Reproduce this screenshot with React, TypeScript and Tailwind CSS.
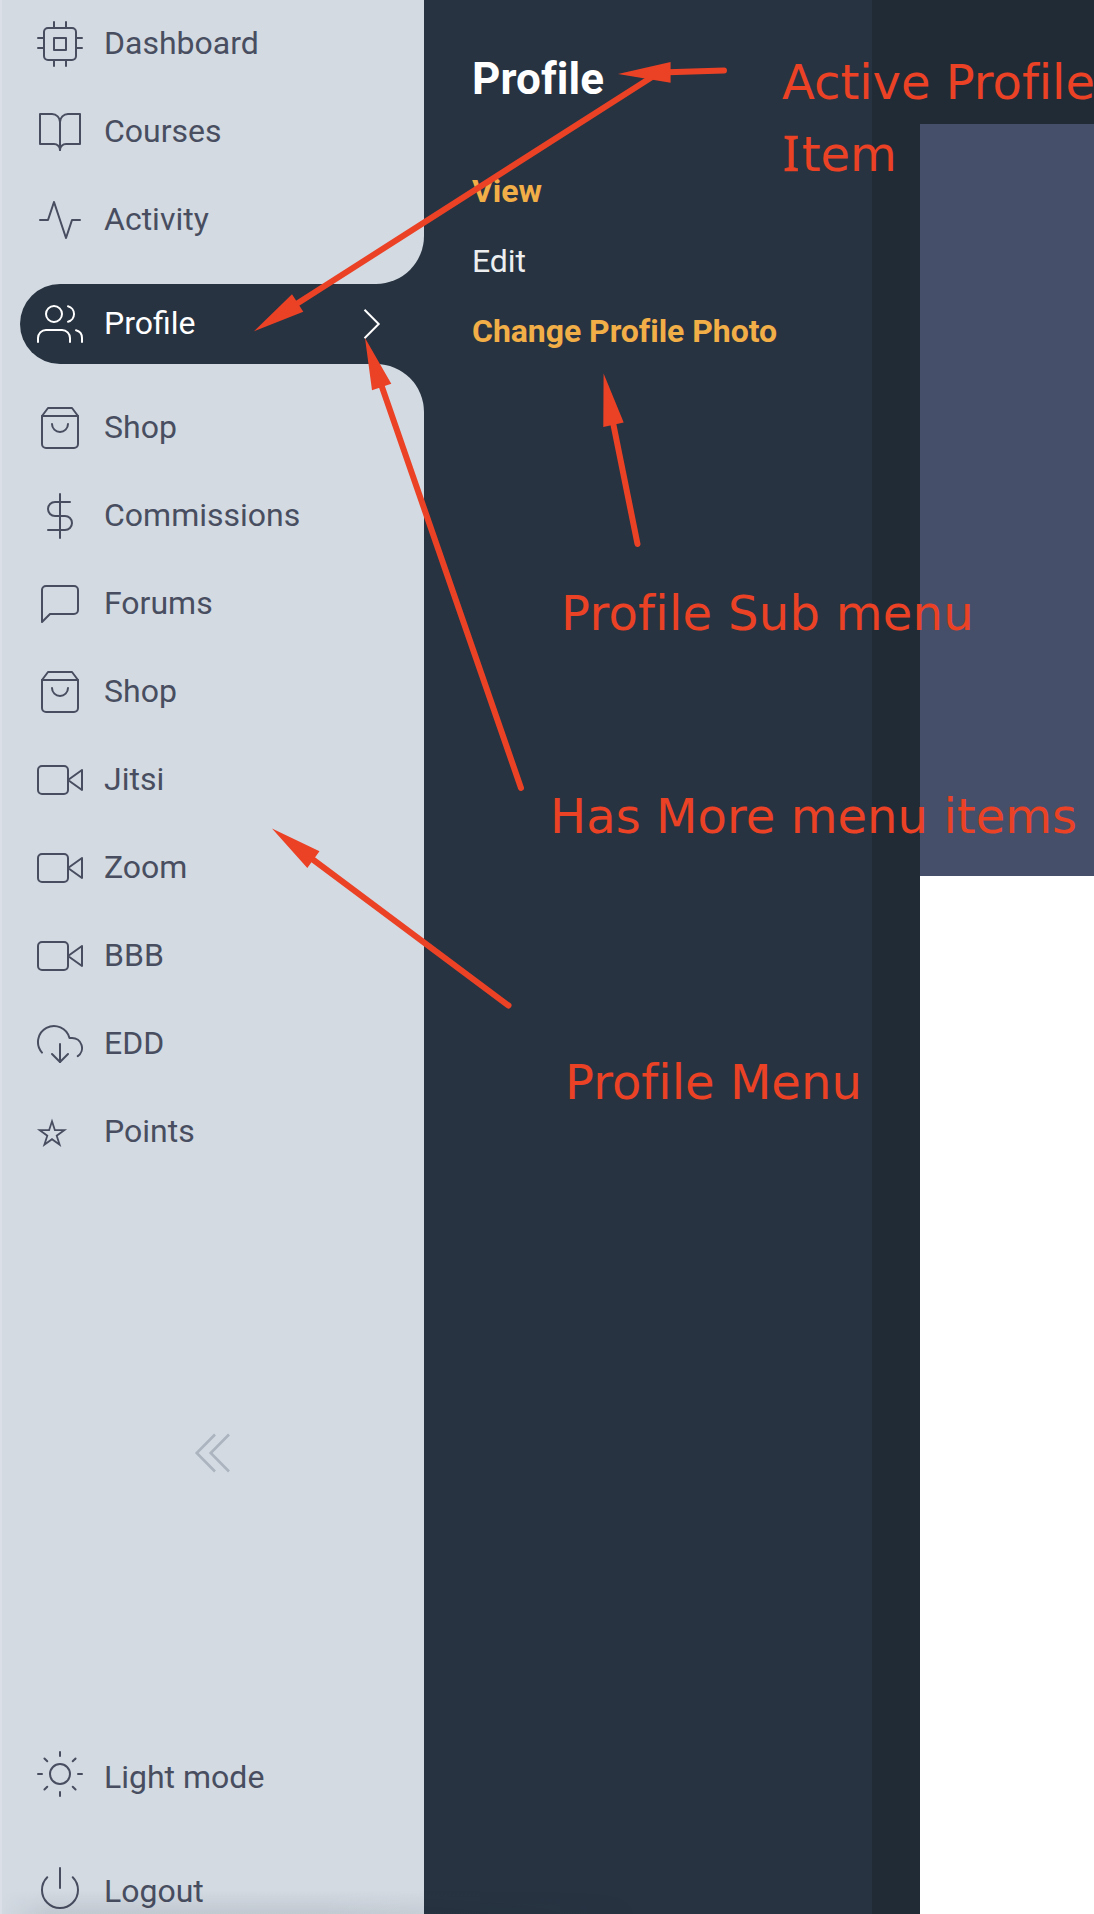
import type { IconType } from "react-icons";
import {
  FiActivity,
  FiBookOpen,
  FiCpu,
  FiDollarSign,
  FiDownloadCloud,
  FiMessageSquare,
  FiPower,
  FiShoppingBag,
  FiSun,
  FiUsers,
  FiVideo,
} from "react-icons/fi";

type Item = { label: string; icon?: IconType };

const topItems: Item[] = [
  { label: "Dashboard", icon: FiCpu },
  { label: "Courses", icon: FiBookOpen },
  { label: "Activity", icon: FiActivity },
];

const lowerItems: Item[] = [
  { label: "Shop", icon: FiShoppingBag },
  { label: "Commissions", icon: FiDollarSign },
  { label: "Forums", icon: FiMessageSquare },
  { label: "Shop", icon: FiShoppingBag },
  { label: "Jitsi", icon: FiVideo },
  { label: "Zoom", icon: FiVideo },
  { label: "BBB", icon: FiVideo },
  { label: "EDD", icon: FiDownloadCloud },
  { label: "Points" },
];

function StarIcon() {
  return (
    <svg className="size-12" viewBox="0 0 48 48" fill="none" stroke="currentColor" strokeWidth="1.8" strokeMiterlimit="10">
      <path d="M16 13.3L18.9 22.2H28.3L20.7 27.7L23.6 36.7L16 31.2L8.4 36.7L11.3 27.7L3.7 22.2H13.1Z" />
    </svg>
  );
}

function MenuRow({ label, icon: Icon }: Item) {
  return (
    <a className="flex h-[88px] items-center gap-5 pl-[34px]">
      {Icon ? <Icon size={48} strokeWidth={1} /> : <StarIcon />}
      <span className="-mt-0.5">{label}</span>
    </a>
  );
}

function FooterRow({ label, icon: Icon }: { label: string; icon: IconType }) {
  return (
    <a className="flex h-[114px] items-center gap-5 pl-[34px]">
      <Icon size={48} strokeWidth={1} />
      <span className="mt-1.5">{label}</span>
    </a>
  );
}

function Sidebar() {
  return (
    <aside className="flex w-[424px] shrink-0 flex-col border-l-2 border-[#dadfe8] text-[32px] leading-10 text-[#484e60]">
      <nav className="h-[284px] shrink-0 rounded-br-[48px] bg-[#d3dae2]">
        {topItems.map((item) => (
          <MenuRow key={item.label} {...item} />
        ))}
      </nav>
      <div className="bg-[#d3dae2] pl-[18px]">
        <a className="flex h-20 items-center gap-5 rounded-l-full bg-[#273341] pl-4 text-white">
          <FiUsers size={48} strokeWidth={1} />
          <span className="-mt-0.5 grow">Profile</span>
          <svg className="mr-[43px] h-8 w-[18px]" viewBox="0 0 18 32" fill="none" stroke="currentColor" strokeWidth="2">
            <path d="M1.5 1.7L15.7 16L1.5 30.3" />
          </svg>
        </a>
      </div>
      <div className="flex h-[1550px] shrink-0 flex-col rounded-tr-[48px] bg-[#d3dae2] pt-5">
        <nav>
          {lowerItems.map((item, i) => (
            <MenuRow key={i} {...item} />
          ))}
        </nav>
        <button className="mt-[257px] flex shrink-0 justify-center pr-0.5 text-[#abb4bf]">
          <svg className="h-10 w-9" viewBox="0 0 36 40" fill="none" stroke="currentColor" strokeWidth="2.6">
            <path d="M21 1.5L2.700 20L21 38.5M35 1.5L16.700 20L35 38.5" />
          </svg>
        </button>
        <div className="mt-[244px]">
          <FooterRow label="Light mode" icon={FiSun} />
          <FooterRow label="Logout" icon={FiPower} />
        </div>
      </div>
    </aside>
  );
}

function SubMenu() {
  return (
    <section className="w-[448px] shrink-0 pl-12 pt-[53px]">
      <h1 className="text-[44px] leading-[52px] font-bold tracking-[0.1px] text-white">Profile</h1>
      <ul className="mt-[51px] text-[32px] leading-[70px] tracking-[-0.05px] text-[#f2ae47]">
        <li className="font-bold">View</li>
        <li className="text-[#eceef0]">Edit</li>
        <li className="font-bold">Change Profile Photo</li>
      </ul>
    </section>
  );
}

function Arrows() {
  return (
    <svg
      className="pointer-events-none absolute inset-0 h-[1914px] w-[1094px]"
      viewBox="0 0 1094 1914"
      stroke="#eb4226"
      strokeWidth="6"
      strokeLinecap="round"
      fill="none"
    >
      <path d="M668 72.3L724 70.5M652 77L298 303M382 387L521 788M613.500 425L637.500 544M313.500 860L508.500 1005.500" />
      <path
        fill="#eb4226"
        stroke="none"
        d="M618 74L670.600 62V82.700ZM254 331.300L292 294.300L303.300 311.700ZM365 338L372 390.300L391.300 383.700ZM603.600 373.500L603.300 427L623.700 422.500ZM272 828.500L319.500 851.300L307.300 868Z"
      />
    </svg>
  );
}

function Annotations() {
  return (
    <div className="pointer-events-none absolute inset-0 overflow-hidden font-['DejaVu_Sans',sans-serif] text-[48px] leading-[72px] whitespace-nowrap text-[#eb4226] [font-variant-ligatures:none]">
      <Arrows />
      <p className="absolute top-[46px] left-[782px]">
        Active Profile
        <br />
        <span className="ml-px mr-[2px] inline-block font-['Noto_Sans',sans-serif] text-[49px] leading-none [-webkit-text-stroke:0.6px_#eb4226]">I</span>tem
      </p>
      <p className="absolute top-[577px] left-[561px] tracking-[0.3px]">Profile Sub menu</p>
      <p className="absolute top-[780px] left-[550px] tracking-[0.07px]">Has More menu items</p>
      <p className="absolute top-[1046px] left-[565px] tracking-[0.05px]">Profile Menu</p>
    </div>
  );
}

export default function App() {
  return (
    <div className="relative flex h-[1914px] w-[1094px] overflow-hidden bg-[#273341] font-['Roboto',sans-serif]">
      <Sidebar />
      <SubMenu />
      <main className="flex grow flex-col bg-[#212b36] pl-12 pt-[124px]">
        <div className="h-[752px] bg-[#464f69]" />
        <div className="grow bg-white" />
      </main>
      <div className="pointer-events-none absolute bottom-0 left-0 h-6 w-[640px] bg-linear-to-t from-[#141c28]/9 to-transparent [mask-image:linear-gradient(to_right,transparent,black_8%,black_50%,transparent)]" />
      <Annotations />
    </div>
  );
}
